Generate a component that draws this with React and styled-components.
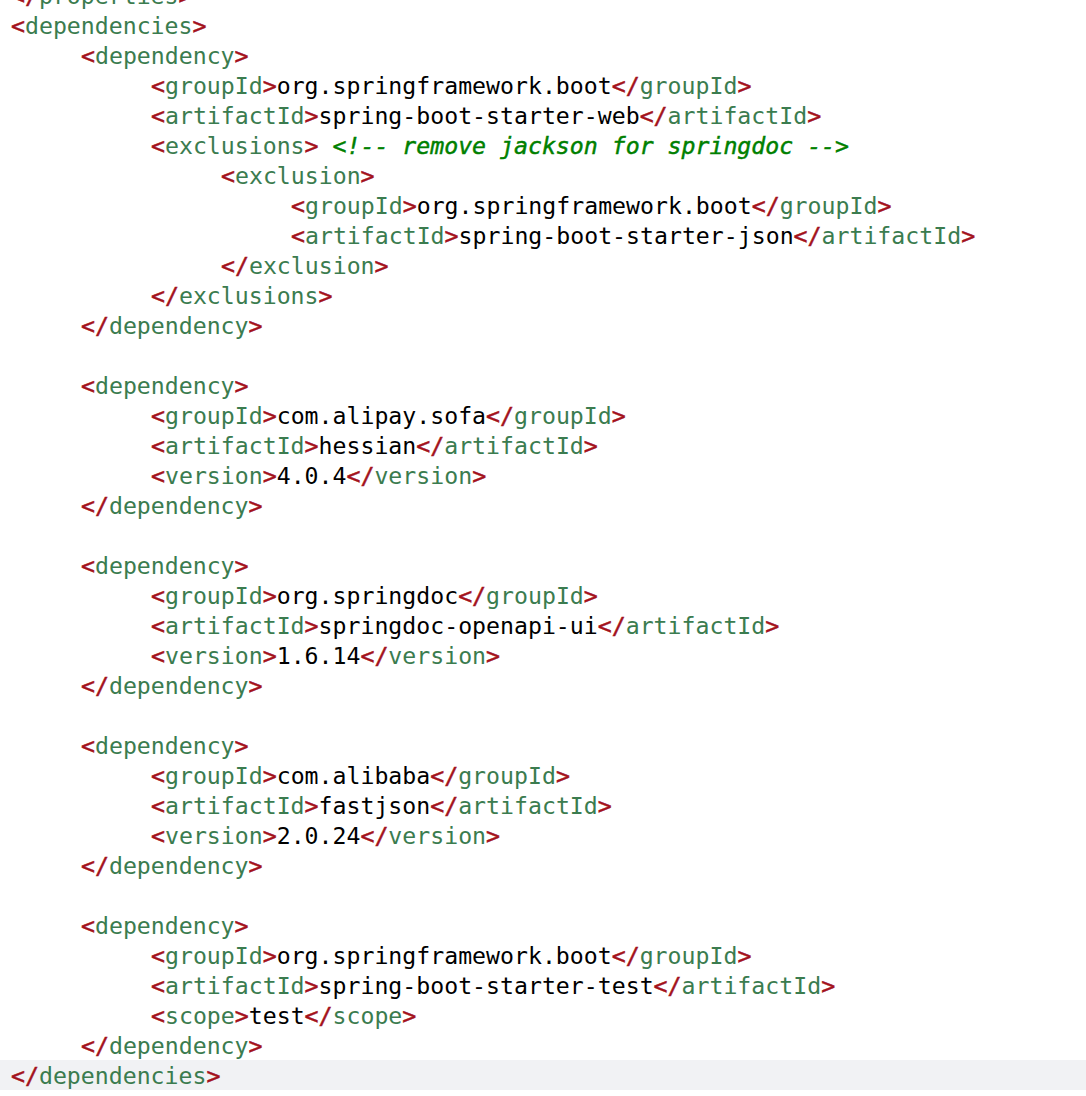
import React from "react";
import styled, { createGlobalStyle } from "styled-components";

const Global = createGlobalStyle`
  html, body { margin: 0; padding: 0; background: #ffffff; overflow: hidden; }
  #root { width: 1086px; height: 1096px; overflow: hidden; }
`;

const Editor = styled.div`
  width: 1086px;
  height: 1096px;
  overflow: hidden;
  background: #ffffff;
  font-family: "DejaVu Sans Mono", "Liberation Mono", monospace;
  font-size: 23.2px;
  color: #000000;
`;

const Lines = styled.div`
  margin-top: -20px;
  display: flex;
  flex-direction: column;
`;

const Line = styled.div`
  box-sizing: border-box;
  height: 30px;
  padding-top: 1px;
  line-height: 30px;
  white-space: pre;
  overflow: hidden;
  padding-left: ${(p) => 11 + p.$indent * 70}px;
  background: ${(p) => (p.$current ? "#f1f2f4" : "transparent")};
`;

const Bracket = styled.span`
  color: #a3121c;
  -webkit-text-stroke: 0.5px #a3121c;
`;

const TagName = styled.span`
  color: #3b7c4f;
`;

const Comment = styled.span`
  color: #008000;
  font-style: italic;
  -webkit-text-stroke: 0.45px #008000;
`;

const Text = styled.span`
  color: #000000;
`;

function Open({ name }) {
  return (
    <>
      <Bracket>&lt;</Bracket>
      <TagName>{name}</TagName>
      <Bracket>&gt;</Bracket>
    </>
  );
}

function Close({ name }) {
  return (
    <>
      <Bracket>&lt;/</Bracket>
      <TagName>{name}</TagName>
      <Bracket>&gt;</Bracket>
    </>
  );
}

const lines = [
  { i: 0, type: "close", tag: "properties" },
  { i: 0, type: "open", tag: "dependencies" },
  { i: 1, type: "open", tag: "dependency" },
  { i: 2, type: "elem", tag: "groupId", text: "org.springframework.boot" },
  { i: 2, type: "elem", tag: "artifactId", text: "spring-boot-starter-web" },
  { i: 2, type: "open", tag: "exclusions", comment: " <!-- remove jackson for springdoc -->" },
  { i: 3, type: "open", tag: "exclusion" },
  { i: 4, type: "elem", tag: "groupId", text: "org.springframework.boot" },
  { i: 4, type: "elem", tag: "artifactId", text: "spring-boot-starter-json" },
  { i: 3, type: "close", tag: "exclusion" },
  { i: 2, type: "close", tag: "exclusions" },
  { i: 1, type: "close", tag: "dependency" },
  { type: "blank" },
  { i: 1, type: "open", tag: "dependency" },
  { i: 2, type: "elem", tag: "groupId", text: "com.alipay.sofa" },
  { i: 2, type: "elem", tag: "artifactId", text: "hessian" },
  { i: 2, type: "elem", tag: "version", text: "4.0.4" },
  { i: 1, type: "close", tag: "dependency" },
  { type: "blank" },
  { i: 1, type: "open", tag: "dependency" },
  { i: 2, type: "elem", tag: "groupId", text: "org.springdoc" },
  { i: 2, type: "elem", tag: "artifactId", text: "springdoc-openapi-ui" },
  { i: 2, type: "elem", tag: "version", text: "1.6.14" },
  { i: 1, type: "close", tag: "dependency" },
  { type: "blank" },
  { i: 1, type: "open", tag: "dependency" },
  { i: 2, type: "elem", tag: "groupId", text: "com.alibaba" },
  { i: 2, type: "elem", tag: "artifactId", text: "fastjson" },
  { i: 2, type: "elem", tag: "version", text: "2.0.24" },
  { i: 1, type: "close", tag: "dependency" },
  { type: "blank" },
  { i: 1, type: "open", tag: "dependency" },
  { i: 2, type: "elem", tag: "groupId", text: "org.springframework.boot" },
  { i: 2, type: "elem", tag: "artifactId", text: "spring-boot-starter-test" },
  { i: 2, type: "elem", tag: "scope", text: "test" },
  { i: 1, type: "close", tag: "dependency" },
  { i: 0, type: "close", tag: "dependencies", current: true },
  { type: "blank" },
];

export default function App() {
  return (
    <>
      <Global />
      <Editor>
        <Lines>
          {lines.map((l, k) => (
            <Line key={k} $indent={l.i || 0} $current={l.current}>
              {l.type === "open" && <Open name={l.tag} />}
              {l.type === "close" && <Close name={l.tag} />}
              {l.type === "elem" && (
                <>
                  <Open name={l.tag} />
                  <Text>{l.text}</Text>
                  <Close name={l.tag} />
                </>
              )}
              {l.comment && <Comment>{l.comment}</Comment>}
              {l.type === "blank" && " "}
            </Line>
          ))}
        </Lines>
      </Editor>
    </>
  );
}
